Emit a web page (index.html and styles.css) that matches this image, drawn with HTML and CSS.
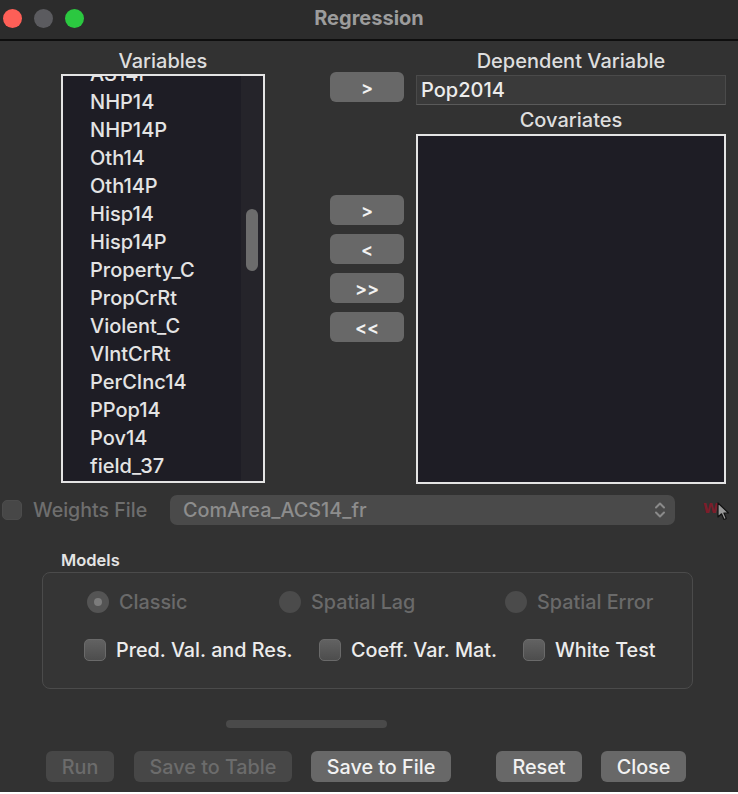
FILE: index.html
```html
<!DOCTYPE html>
<html>
<head>
<meta charset="utf-8">
<link rel="stylesheet" href="styles.css">
</head>
<body>
<div class="window">
  <header class="titlebar">
    <div class="lights">
      <span class="light red"></span>
      <span class="light gray"></span>
      <span class="light green"></span>
    </div>
    <div class="title">Regression</div>
  </header>
  <main class="content">
    <section class="top">
      <div class="col-left">
        <div class="label">Variables</div>
        <div class="listbox vars">
          <ul class="items">
            <li>AS14P</li>
            <li>NHP14</li>
            <li>NHP14P</li>
            <li>Oth14</li>
            <li>Oth14P</li>
            <li>Hisp14</li>
            <li>Hisp14P</li>
            <li>Property_C</li>
            <li>PropCrRt</li>
            <li>Violent_C</li>
            <li>VlntCrRt</li>
            <li>PerCInc14</li>
            <li>PPop14</li>
            <li>Pov14</li>
            <li>field_37</li>
          </ul>
          <div class="vscroll"><div class="thumb"></div></div>
        </div>
      </div>
      <div class="col-mid">
        <button class="btn arrow first">&gt;</button>
        <div class="arrow-group">
          <button class="btn arrow">&gt;</button>
          <button class="btn arrow">&lt;</button>
          <button class="btn arrow">&gt;&gt;</button>
          <button class="btn arrow">&lt;&lt;</button>
        </div>
      </div>
      <div class="col-right">
        <div class="label">Dependent Variable</div>
        <div class="field">Pop2014</div>
        <div class="label cov-label">Covariates</div>
        <div class="listbox cov"></div>
      </div>
    </section>

    <section class="weights">
      <div class="wcheck">
        <span class="check disabled"></span>
        <span class="wlabel">Weights File</span>
      </div>
      <div class="dropdown">
        <span>ComArea_ACS14_fr</span>
        <svg class="chev" width="12" height="20" viewBox="0 0 12 20">
          <path d="M2 7.5 L6 3.5 L10 7.5" fill="none" stroke="#8a8a8a" stroke-width="2" stroke-linecap="round" stroke-linejoin="round"/>
          <path d="M2 12.5 L6 16.5 L10 12.5" fill="none" stroke="#8a8a8a" stroke-width="2" stroke-linecap="round" stroke-linejoin="round"/>
        </svg>
      </div>
      <div class="wicon">
        <span class="wglyph">W</span>
        <svg class="cursor" width="13" height="19" viewBox="0 0 13 19">
          <path d="M1 1 L1 15 L4.5 11.8 L7 17.5 L9.3 16.5 L6.9 11 L11.5 11 Z" fill="#9a9a9a" stroke="#111" stroke-width="1.2" stroke-linejoin="round"/>
        </svg>
      </div>
    </section>

    <section class="models">
      <div class="models-label">Models</div>
      <div class="group">
        <div class="radio-row">
          <label class="radio-item w-classic"><span class="radio on"></span><span class="dim">Classic</span></label>
          <label class="radio-item w-lag"><span class="radio"></span><span class="dim">Spatial Lag</span></label>
          <label class="radio-item"><span class="radio"></span><span class="dim">Spatial Error</span></label>
        </div>
        <div class="check-row">
          <label class="check-item w-pred"><span class="check"></span><span>Pred. Val. and Res.</span></label>
          <label class="check-item w-coeff"><span class="check"></span><span>Coeff. Var. Mat.</span></label>
          <label class="check-item"><span class="check"></span><span>White Test</span></label>
        </div>
      </div>
    </section>

    <div class="hbar"></div>

    <footer class="actions">
      <button class="btn act off w-run">Run</button>
      <button class="btn act off w-table">Save to Table</button>
      <button class="btn act w-file">Save to File</button>
      <button class="btn act w-reset">Reset</button>
      <button class="btn act w-close">Close</button>
    </footer>
  </main>
</div>
</body>
</html>
```

FILE: styles.css
```css
* { box-sizing: border-box; }

html, body {
  margin: 0;
  padding: 0;
  background: #ffffff;
}

body {
  font-family: "Inter", "Liberation Sans", sans-serif;
  width: 738px;
  height: 794px;
  overflow: hidden;
}

.window {
  width: 738px;
  height: 792px;
  background: #323232;
  display: flex;
  flex-direction: column;
}

.titlebar {
  height: 41px;
  background: #2c2c2c;
  border-bottom: 2px solid #0e0e0e;
  display: flex;
  align-items: center;
  position: relative;
  flex: none;
}

.lights {
  display: flex;
  gap: 12px;
  padding-left: 3px;
  margin-top: -2px;
}

.light {
  width: 19px;
  height: 19px;
  border-radius: 50%;
  display: block;
}
.light.red { background: #fe5f57; }
.light.gray { background: #5b5b5f; }
.light.green { background: #2bc840; }

.title {
  position: absolute;
  left: 0;
  right: 0;
  top: 6px;
  text-align: center;
  font-weight: 700;
  font-size: 20px;
  color: #9c9c9c;
}

.content {
  flex: 1;
  display: flex;
  flex-direction: column;
  padding-top: 8px;
}

/* ---------- top area ---------- */
.top {
  display: grid;
  grid-template-columns: 204px 139px 322px;
  padding-left: 61px;
}

.col-left { width: 204px; }
.col-mid {
  margin-left: 65px;
  width: 74px;
  display: flex;
  flex-direction: column;
}
.col-right {
  margin-left: 12px;
  width: 310px;
  display: flex;
  flex-direction: column;
}

.label {
  height: 25px;
  line-height: 25px;
  text-align: center;
  font-size: 20px;
  color: #dedede;
  font-weight: 500;
  white-space: nowrap;
}

.listbox {
  border: 2px solid #e4e4e4;
  background: #1e1d25;
}

.listbox.vars {
  height: 409px;
  display: flex;
  overflow: hidden;
}

.items {
  list-style: none;
  margin: -16px 0 0 0;
  padding: 0 0 0 27px;
  flex: 1;
}

.items li {
  height: 28px;
  line-height: 28px;
  font-size: 20px;
  color: #e4e4e4;
  font-weight: 500;
  white-space: nowrap;
}

.vscroll {
  width: 22px;
  background: #25242a;
  display: flex;
  justify-content: center;
}

.thumb {
  width: 12px;
  height: 62px;
  margin-top: 133px;
  border-radius: 6px;
  background: #6c6c6c;
}

.btn {
  font-family: "Inter", "Liberation Sans", sans-serif;
  border: none;
  border-radius: 6px;
  background: #686868;
  color: #f2f2f2;
  padding: 0;
  cursor: default;
}

.btn.arrow {
  width: 74px;
  height: 30px;
  font-size: 18px;
  font-weight: 600;
}

.btn.arrow.first { margin-top: 23px; }

.arrow-group {
  margin-top: 93px;
  display: flex;
  flex-direction: column;
  gap: 9px;
}

.field {
  margin-top: 1px;
  height: 30px;
  background: #3a3a3a;
  border: 1px solid #4a4a4a;
  border-bottom-color: #5a5a5a;
  padding-left: 4px;
  line-height: 28px;
  font-size: 20px;
  color: #ececec;
  font-weight: 500;
}

.cov-label { margin-top: 3px; }

.listbox.cov {
  margin-top: 1px;
  height: 350px;
}

/* ---------- weights ---------- */
.weights {
  margin-top: 11px;
  height: 30px;
  display: grid;
  grid-template-columns: 168px 505px 1fr;
  align-items: center;
  padding-left: 2px;
}

.wcheck {
  display: flex;
  align-items: center;
  gap: 11px;
}

.check {
  width: 22px;
  height: 22px;
  border-radius: 5px;
  background: linear-gradient(#626262, #4d4d4d);
  border: 1px solid #6a6a6a;
  display: block;
  flex: none;
}

.check.disabled {
  width: 20px;
  height: 20px;
  background: #474747;
  border-color: #4c4c4c;
}

.wlabel {
  font-size: 19.6px;
  color: #6e6e6e;
  font-weight: 500;
  white-space: nowrap;
}

.dropdown {
  height: 30px;
  background: #4a4a4a;
  border-radius: 7px;
  display: flex;
  align-items: center;
  justify-content: space-between;
  padding: 0 9px 0 13px;
  font-size: 19.8px;
  color: #8d8d8d;
  font-weight: 500;
}

.chev { display: block; }

.wicon {
  position: relative;
  height: 30px;
}

.wglyph {
  position: absolute;
  left: 28px;
  top: 5px;
  font-family: "DejaVu Sans", sans-serif;
  font-weight: 700;
  font-size: 14px;
  color: #7c1d2a;
}

.cursor {
  position: absolute;
  left: 42px;
  top: 7px;
}

/* ---------- models ---------- */
.models { margin-top: 25px; }

.models-label {
  padding-left: 61px;
  height: 20px;
  line-height: 20px;
  font-size: 16.5px;
  font-weight: 600;
  color: #e4e4e4;
}

.group {
  margin: 2px 0 0 42px;
  width: 651px;
  height: 117px;
  border: 1.5px solid #4b4b4b;
  border-radius: 8px;
  background: #353535;
  padding: 14px 0 0 44px;
  display: flex;
  flex-direction: column;
  gap: 18px;
}

.radio-row, .check-row {
  display: flex;
  align-items: center;
  height: 30px;
  font-size: 19.8px;
  font-weight: 500;
  white-space: nowrap;
}

.check-row { margin-left: -3px; }

.radio-item, .check-item {
  display: flex;
  align-items: center;
  gap: 10px;
}

.w-classic { width: 192px; }
.w-lag { width: 226px; }
.w-pred { width: 235px; }
.w-coeff { width: 204px; }

.radio {
  width: 22px;
  height: 22px;
  border-radius: 50%;
  background: #4b4b4b;
  display: flex;
  align-items: center;
  justify-content: center;
  flex: none;
}

.radio.on { background: #545454; }
.radio.on::after {
  content: "";
  width: 8px;
  height: 8px;
  border-radius: 50%;
  background: #7c7c7c;
}

.dim { color: #6a6a6a; }
.check-item { color: #ececec; }

/* ---------- bottom ---------- */
.hbar {
  margin: 31px 0 0 226px;
  width: 161px;
  height: 8px;
  border-radius: 4px;
  background: #4a4a4a;
}

.actions {
  margin-top: 23px;
  display: flex;
  padding-left: 46px;
}

.btn.act {
  height: 31px;
  font-size: 19.8px;
  font-weight: 500;
  border-radius: 6px;
  white-space: nowrap;
}

.btn.act.off {
  background: #474747;
  color: #6c6c6c;
}

.w-run { width: 68px; }
.w-table { width: 158px; margin-left: 20px; }
.w-file { width: 140px; margin-left: 19px; }
.w-reset { width: 86px; margin-left: 45px; }
.w-close { width: 85px; margin-left: 19px; }
```
